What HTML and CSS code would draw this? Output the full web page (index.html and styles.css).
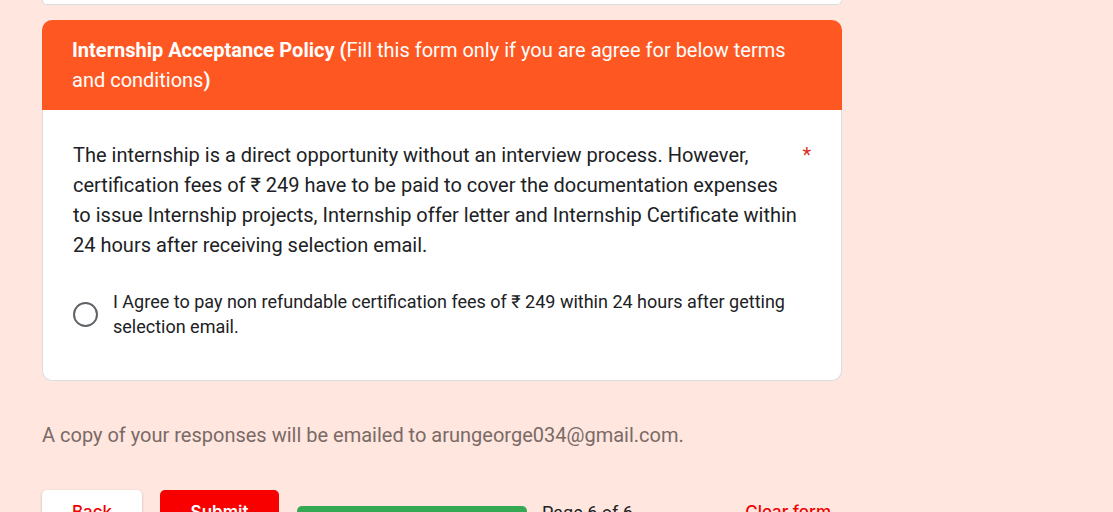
FILE: index.html
```html
<!DOCTYPE html>
<html lang="en">
<head>
<meta charset="utf-8">
<title>Internship Form</title>
<link rel="stylesheet" href="styles.css">
</head>
<body>
<form class="form">
  <div class="card previous"></div>
  <section class="card question">
    <h2 class="heading"><b>Internship Acceptance Policy (</b>Fill this form only if you are agree for below terms and conditions<b>)</b></h2>
    <div class="body" role="radiogroup" aria-labelledby="prompt">
      <div class="prompt">
        <p class="text" id="prompt">The internship is a direct opportunity without an interview process. However, certification fees of ₹ 249 have to be paid to cover the documentation expenses to issue Internship projects, Internship offer letter and Internship Certificate within 24 hours after receiving selection email.</p>
        <span class="required">*</span>
      </div>
      <div class="option">
        <input class="radio" id="agree" type="radio" name="agree">
        <label for="agree">I Agree to pay non refundable certification fees of ₹ 249 within 24 hours after getting selection email.</label>
      </div>
    </div>
  </section>
  <p class="notice">A copy of your responses will be emailed to arungeorge034@gmail.com.</p>
  <div class="actions">
    <button class="button back" type="button">Back</button>
    <button class="button submit" type="submit">Submit</button>
    <div class="progress"></div>
    <span class="page">Page 6 of 6</span>
    <button class="clear" type="reset">Clear form</button>
  </div>
</form>
</body>
</html>
```
FILE: styles.css
```css
* { box-sizing: border-box; }
html { overflow: hidden; }
body { margin: 0; background: #ffe6df; color: #202124; font-family: Roboto, "Noto Sans", sans-serif; }
.form { max-width: 842px; padding-left: 42px; }
.card { background: #fff; border: 1px solid #dadce0; border-radius: 10px; }
.previous { height: 5px; margin-bottom: 15px; border-top: 0; border-radius: 0 0 10px 10px; }
.question { border-top: 0; }
.heading { margin: 0 -1px; padding: 15px 30px; border-radius: 10px 10px 0 0; background: #ff5722; color: #fff; font-size: 20px; line-height: 30px; font-weight: 400; }
.body { padding: 30px 30px 41px; }
.prompt { display: flex; justify-content: space-between; }
.text { margin: 0; max-width: 725px; font-size: 20px; line-height: 30px; }
.required { color: #d93025; font-size: 20px; line-height: 30px; }
.option { display: flex; align-items: center; gap: 15px; margin-top: 29px; font-size: 18px; line-height: 25px; }
.radio { appearance: none; flex: none; width: 25px; height: 25px; margin: 0; border: 2px solid #5f6368; border-radius: 50%; background: #fff; }
.notice { margin: 39px 0 40px; color: #7a6a66; font-size: 20px; line-height: 30px; }
.actions { display: flex; align-items: center; }
.button, .clear { height: 45px; padding: 0; border: 0; font: 500 17px/25px Inter, sans-serif; }
.button { margin-right: 18px; border-radius: 5px; }
.back { width: 100px; background: #fff; color: #f00000; box-shadow: 0 1px 3px #0003; }
.submit { width: 119px; background: #f80000; color: #fff; font-weight: 600; }
.progress { width: 230px; height: 13px; border-radius: 5px; background: #34a853; }
.page { margin-left: 15px; font-size: 18px; line-height: 25px; }
.clear { margin-left: auto; padding: 0 11px; background: none; color: #f00000; }
```
